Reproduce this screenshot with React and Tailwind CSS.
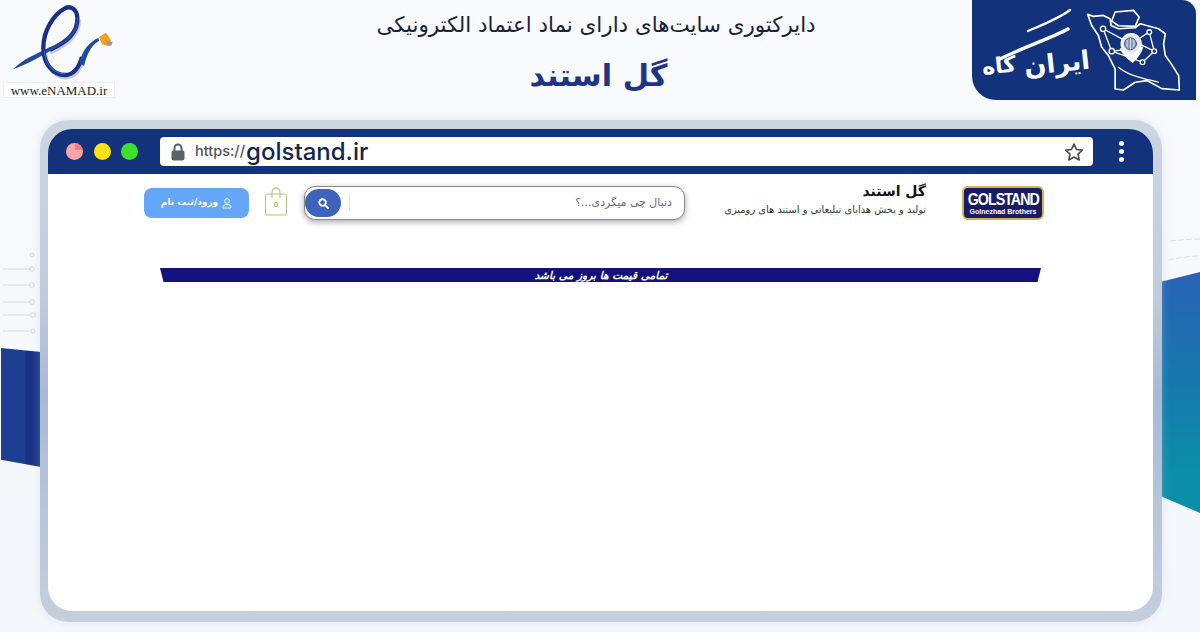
import React from "react";

const fa = { fontFamily: '"DejaVu Sans", sans-serif' };

function ENamad() {
  return (
    <div className="w-[116px] h-[98px] flex flex-col items-start shrink-0">
      <svg width="115" height="80" viewBox="0 0 345 240" className="shrink-0">
        <path d="M150 156 C200 133 240 100 238 55 M136 150 C136 195 165 232 200 230 C228 228 244 198 252 172" fill="none" stroke="#c6c8d0" strokeWidth="11" />
        <path d="M40 205 C70 172 110 160 150 138 L154 148 C112 172 76 192 40 205 Z" fill="#1f4a9e" />
        <path d="M150 146 C200 123 235 95 232 50 C230 22 210 14 195 22 C160 40 130 90 130 140 C130 190 160 222 195 222 C222 222 238 196 246 168" fill="none" stroke="#1a2f86" strokeWidth="13" />
        <path d="M150 146 C200 123 235 95 232 50" fill="none" stroke="#2a4bb0" strokeWidth="5" />
        <path d="M133 150 C136 190 160 218 195 219" fill="none" stroke="#2d62bd" strokeWidth="4" />
        <path d="M238 185 C248 145 268 124 295 110 L297 120 C276 132 264 150 252 195 Z" fill="#1f4a9e" />
        <path d="M297 108 L318 95 L333 118 L322 134 L306 130 Z" fill="#f0a11e" />
        <path d="M318 120 L338 122 L334 134 L322 134 Z" fill="#9a9aa4" />
      </svg>
      <div className="ml-[3px] mt-[1px] w-[112px] h-[16px] bg-white border border-[#eceef2] flex items-center justify-center text-[13px] leading-none text-[#222] whitespace-nowrap" style={{ fontFamily: '"Liberation Serif", serif' }}>
        www.eNAMAD.ir
      </div>
    </div>
  );
}

function IranMap() {
  return (
    <svg width="97" height="87" viewBox="550 20 290 260" fill="none" stroke="#fff" strokeWidth="4" strokeLinejoin="round" strokeLinecap="round" className="shrink-0">
      <path d="M558 42 L575 48 L605 45 L625 55 L628 75 L650 85 L700 82 L715 70 L770 85 L790 100 L785 130 L790 165 L808 190 L830 225 L832 268 L780 264 L735 240 L700 245 L665 268 L640 265 L640 205 L620 165 L600 140 L590 105 L570 75 Z" strokeWidth="5" />
      <path d="M640 35 L695 30 L712 50 L700 78 L650 76 L630 62 Z" strokeWidth="5" />
      <path d="M650 200 C680 225 720 232 770 245" strokeWidth="4" />
      <path d="M604 85 L660 115 M604 85 L630 152 M630 152 L668 148 M630 152 L722 185 M722 185 L757 152 M757 152 L712 130 M757 152 L742 95 M742 95 L706 118" />
      <circle cx="604" cy="85" r="8" fill="#12327c" />
      <circle cx="630" cy="152" r="8" fill="#12327c" />
      <circle cx="722" cy="185" r="7" fill="#12327c" />
      <circle cx="757" cy="152" r="7" fill="#12327c" />
      <circle cx="742" cy="95" r="7" fill="#12327c" />
      <path d="M656 145 C665 165 680 175 692 185 C705 172 718 160 722 140 Z" fill="#fff" />
      <circle cx="688" cy="130" r="30" fill="#e3e8f0" stroke="#fff" />
      <circle cx="686" cy="130" r="18" fill="#8b9bbb" stroke="#12327c" strokeWidth="2" />
      <path d="M676 120 V140 M686 115 V145 M696 120 V140" stroke="#e3e8f0" strokeWidth="2.5" />
    </svg>
  );
}

function IranGahBadge() {
  return (
    <div className="w-[224px] h-[100px] shrink-0 mr-[4px] bg-[#12327c] rounded-bl-[24px] rounded-tr-[14px] flex items-center pl-[10px] pr-[18px] overflow-hidden">
      <div className="relative w-[103px] h-[90px] shrink-0">
        <svg width="103" height="90" viewBox="0 0 103 90" fill="none" stroke="#fff" strokeLinecap="round" className="absolute inset-0">
          <path d="M46 26 C60 20 76 14 88 5" strokeWidth="2.4" />
          <path d="M18 54 C42 42 72 32 86 24" strokeWidth="3.4" />
        </svg>
        <div className="absolute left-[42px] top-[45px] text-white text-[26px] font-bold leading-none whitespace-nowrap -rotate-[6deg]" style={fa} dir="rtl">ایران</div>
        <div className="absolute left-0 top-[50px] text-white text-[22px] font-bold leading-none whitespace-nowrap -rotate-[6deg]" style={fa} dir="rtl">گاه</div>
      </div>
      <IranMap />
    </div>
  );
}

function Header() {
  return (
    <header className="flex items-start justify-between h-[118px] shrink-0">
      <div className="pt-[1px]"><ENamad /></div>
      <div className="flex flex-col items-center pt-[11px] ml-[104px]" style={fa} dir="rtl">
        <div className="text-[21.4px] leading-[28px] text-[#1a2236] whitespace-nowrap">دایرکتوری سایت‌های دارای نماد اعتماد الکترونیکی</div>
        <div className="text-[30.4px] leading-[38px] mt-[18px] ml-[5px] font-bold text-[#1d3585] whitespace-nowrap">گل استند</div>
      </div>
      <IranGahBadge />
    </header>
  );
}

function TitleBar() {
  return (
    <div className="h-[45px] bg-[#12327c] flex items-center shrink-0 pl-[18px] pr-[29px]">
      <div className="flex items-center gap-[10.5px] w-[94px] shrink-0">
        <span className="w-[17px] h-[17px] rounded-full bg-[#f8a5a5] overflow-hidden relative shrink-0">
          <span className="absolute right-0 top-0 w-[8px] h-[7px] bg-[#f07c7c]" />
        </span>
        <span className="w-[17px] h-[17px] rounded-full bg-[#ffe21a] shrink-0" />
        <span className="w-[17px] h-[17px] rounded-full bg-[#3fe02a] shrink-0" />
      </div>
      <div className="w-[933px] h-[29px] bg-white rounded-[4px] flex items-center pl-[11px] pr-[9px] shrink-0">
        <svg width="14" height="18" viewBox="0 0 14 18" className="shrink-0">
          <path d="M3.5 8 V5 A3.5 3.5 0 0 1 10.5 5 V8" fill="none" stroke="#5e6068" strokeWidth="2" />
          <rect x="0.5" y="7.5" width="13" height="10" rx="2" fill="#5e6068" />
        </svg>
        <span className="ml-[10px] text-[14.5px] text-[#4e525c] font-medium leading-none" style={{ fontFamily: '"Inter", sans-serif' }}>https://</span>
        <span className="ml-[1px] text-[24px] text-[#12264f] font-medium leading-none" style={{ fontFamily: '"Inter", sans-serif' }}>golstand.ir</span>
        <svg width="20" height="20" viewBox="0 0 24 24" fill="none" stroke="#4a4d55" strokeWidth="2" strokeLinejoin="round" className="ml-auto shrink-0">
          <path d="M12 2.5 L15 9 L22 9.8 L16.8 14.5 L18.2 21.5 L12 18 L5.8 21.5 L7.2 14.5 L2 9.8 L9 9 Z" />
        </svg>
      </div>
      <div className="ml-auto flex flex-col gap-[3px]">
        <span className="w-[5px] h-[5px] rounded-full bg-white" />
        <span className="w-[5px] h-[5px] rounded-full bg-white" />
        <span className="w-[5px] h-[5px] rounded-full bg-white" />
      </div>
    </div>
  );
}

function GolstandLogo() {
  return (
    <div className="w-[82px] h-[34px] rounded-[6px] border-[2px] border-[#d2b44c] bg-[#1a1a6a] flex flex-col items-center justify-center shrink-0 overflow-hidden">
      <div className="text-white font-bold text-[17px] leading-[17px] tracking-[-1.2px] scale-x-[0.84] whitespace-nowrap" style={{ fontFamily: '"Liberation Sans", sans-serif' }}>GOLSTAND</div>
      <div className="text-white font-bold text-[7px] leading-[8px] whitespace-nowrap" style={{ fontFamily: '"Liberation Sans", sans-serif' }}>Golnezhad Brothers</div>
    </div>
  );
}

function NavRow() {
  return (
    <div className="flex items-start pl-[96px] pt-[13px] h-[94px] shrink-0" style={fa}>
      <button className="w-[105px] h-[30px] mt-[1px] rounded-[8px] bg-[#64a6f7] flex items-center justify-center gap-[4px] text-white text-[9px] font-bold shrink-0" dir="rtl">
        <svg width="10" height="11" viewBox="0 0 10 11" fill="none" stroke="#fff" strokeWidth="0.9">
          <circle cx="5" cy="3" r="2.3" />
          <path d="M1 10 C1 7 2.5 6.6 5 6.6 C7.5 6.6 9 7 9 10 Z" />
        </svg>
        <span>ورود/ثبت نام</span>
      </button>
      <svg width="24" height="30" viewBox="0 0 24 30" fill="none" stroke="#b4c07c" strokeWidth="1" className="ml-[15px] shrink-0">
        <rect x="1.5" y="7" width="21" height="21" rx="1.5" />
        <path d="M8 11 V5 A4 4 0 0 1 16 5 V11" />
        <text x="12" y="20" fontSize="7" textAnchor="middle" fill="#8a9440" stroke="none">0</text>
      </svg>
      <div className="ml-[16px] mt-[-1px] w-[381px] h-[34px] bg-white rounded-[11px] border border-[#8b8b8b] shadow-[0_2px_6px_rgba(0,0,0,0.35)] flex items-center shrink-0">
        <div className="w-[36px] h-[28px] rounded-full bg-[#3f62bd] flex items-center justify-center shrink-0">
          <svg width="11" height="11" viewBox="0 0 12 12" fill="none" stroke="#fff" strokeWidth="2" strokeLinecap="round">
            <circle cx="5" cy="5" r="3.6" />
            <path d="M8 8 L11 11" />
          </svg>
        </div>
        <span className="ml-[8px] w-px h-[16px] bg-[#e2e4e8] shrink-0" />
        <span className="flex-1 text-right pr-[12px] text-[11px] text-[#6a6a6a]" dir="rtl">دنبال چی میگردی...؟</span>
      </div>
      <div className="ml-[39px] w-[202px] flex flex-col items-start shrink-0 mt-[-5px]" dir="rtl">
        <div className="text-[14px] leading-[18px] font-bold text-[#111] whitespace-nowrap">گل استند</div>
        <div className="text-[9.9px] leading-[12px] mt-[4px] text-[#333] whitespace-nowrap">تولید و پخش هدایای تبلیغاتی و استند های رومیزی</div>
      </div>
      <div className="ml-[36px] -mt-[1px]"><GolstandLogo /></div>
    </div>
  );
}

function Banner() {
  return (
    <div className="ml-[112px] w-[881px] h-[14px] bg-[#14107c] [clip-path:polygon(0_0,100%_0,99.6%_100%,0.4%_100%)] flex items-center justify-center pl-[1px] shrink-0">
      <span className="text-white text-[10.6px] italic font-bold leading-none whitespace-nowrap" style={fa} dir="rtl">تمامی قیمت ها بروز می باشد</span>
    </div>
  );
}

function Decor() {
  return (
    <>
      <div className="absolute left-[1px] top-[348px] w-[40px] h-[119px] bg-[linear-gradient(90deg,#1c3f92_0%,#1c3f92_60%,#173285_62%,#173285_100%)] [clip-path:polygon(0_0,100%_3.4%,100%_100%,0_94%)]" />
      <div className="absolute left-[1161px] top-[272px] w-[39px] h-[241px] bg-[linear-gradient(180deg,#2a63b6_0%,#1678ad_45%,#0b8fa8_85%)] [clip-path:polygon(0_4%,100%_0,100%_100%,0_93%)]" />
      <svg width="40" height="90" viewBox="0 0 40 90" fill="none" stroke="#c6ccd6" strokeWidth="0.7" className="absolute left-0 top-[250px]">
        <path d="M3 19 H30 M3 35 H30 M3 52 H30 M3 65 H30 M3 81 H30" />
        <circle cx="32" cy="5" r="2" /><circle cx="32" cy="19" r="2.4" /><circle cx="32" cy="35" r="2.4" /><circle cx="32" cy="52" r="2.4" /><circle cx="33" cy="65" r="2.4" /><circle cx="33" cy="81" r="2" />
      </svg>
      <svg width="40" height="40" viewBox="0 0 40 40" fill="none" stroke="#ccd2dc" strokeWidth="0.7" strokeDasharray="6 2" className="absolute left-[1162px] top-[232px]">
        <path d="M8 9 C18 8 28 7 38 7 M6 28 C16 26 28 24 38 24" />
      </svg>
    </>
  );
}

export default function App() {
  return (
    <div className="relative w-[1200px] h-[632px] overflow-hidden bg-[linear-gradient(180deg,#f8fafd,#f4f7fb)]">
      <Decor />
      <div className="relative flex flex-col h-full">
        <Header />
        <main className="ml-[40px] mt-[2px] w-[1122px] h-[502px] pt-[9px] pl-[8px] pr-[9px] pb-[11px] rounded-[28px] bg-[linear-gradient(180deg,#cbd6e0_0%,#c1cbdc_35%,#a9b8d5_55%,#b2c0d8_68%,#c4cfdd_100%)] shadow-[0_0_8px_rgba(190,200,215,0.35)]">
          <div className="h-full rounded-[24px] overflow-hidden bg-white flex flex-col">
            <TitleBar />
            <NavRow />
            <Banner />
          </div>
        </main>
      </div>
    </div>
  );
}
